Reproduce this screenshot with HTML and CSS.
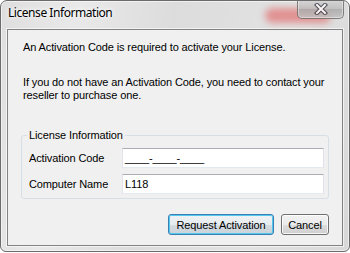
FILE: index.html
```html
<!DOCTYPE html>
<html lang="en">
<head>
    <meta charset="UTF-8">
    <title>License Information</title>
    <link rel="stylesheet" href="styles.css">
</head>
<body>
    <div class="window">
        <div class="titlebar">
            <span class="title">License Information</span>
            <div class="glow"></div>
            <button class="close" type="button" aria-label="Close">
                <svg width="14" height="12" viewBox="0 0 14 12">
                    <path d="M3 2 L11 10 M11 2 L3 10" stroke="#3b3f4a" stroke-width="4.2" stroke-linecap="square" fill="none"/>
                    <path d="M3 2 L11 10 M11 2 L3 10" stroke="#ffffff" stroke-width="2" stroke-linecap="square" fill="none"/>
                </svg>
            </button>
        </div>
        <div class="client">
            <p class="intro first">An Activation Code is required to activate your License.</p>
            <p class="intro">If you do not have an Activation Code, you need to contact your<br>reseller to purchase one.</p>
            <fieldset class="group">
                <legend>License Information</legend>
                <div class="row">
                    <label>Activation Code</label>
                    <div class="field">____-____-____</div>
                </div>
                <div class="row">
                    <label>Computer Name</label>
                    <div class="field">L118</div>
                </div>
            </fieldset>
            <div class="buttons">
                <button class="btn default" type="button">Request Activation</button>
                <button class="btn cancel" type="button">Cancel</button>
            </div>
        </div>
    </div>
</body>
</html>
```

FILE: styles.css
```css
body {
    margin: 0;
    background: #ffffff;
    font-family: "Liberation Sans", Arial, sans-serif;
    font-size: 11px;
    letter-spacing: -0.12px;
    color: #000;
}
.window {
    box-sizing: border-box;
    width: 350px;
    height: 252px;
    border: 1px solid #6b6b6b;
    border-radius: 7px 7px 6px 6px;
    background: linear-gradient(100deg, #dedede 0%, #e9e9e9 20%, #dcdcdc 45%, #e2e2e2 75%, #d8d8d8 100%);
    box-shadow: inset 0 0 0 1px rgba(255, 255, 255, 0.55);
    display: flex;
    flex-direction: column;
    overflow: hidden;
}
.titlebar {
    position: relative;
    height: 28px;
    display: flex;
    justify-content: space-between;
    align-items: flex-start;
}
.title {
    margin: 4px 0 0 7px;
    font-family: "Noto Sans", "Open Sans", sans-serif;
    font-size: 12px;
    letter-spacing: -0.45px;
    line-height: 16px;
    color: #000;
    text-shadow: 0 0 6px #fff, 0 0 4px #fff;
    position: relative;
    z-index: 1;
}
.glow {
    position: absolute;
    left: 264px;
    top: 7px;
    width: 66px;
    height: 15px;
    border-radius: 8px;
    background: rgba(225, 80, 80, 0.55);
    filter: blur(3.5px);
}
.close {
    position: relative;
    z-index: 1;
    width: 47px;
    height: 19px;
    margin: -1px 5px 0 0;
    padding: 0;
    border: 1px solid #6e6e6e;
    border-top: none;
    border-radius: 0 0 5px 5px;
    background: linear-gradient(#d3d3d3, #bdbdbd 50%, #a9a9a9 51%, #c2c2c2);
    box-shadow: inset 0 0 0 1px rgba(255, 255, 255, 0.45);
    display: flex;
    align-items: center;
    justify-content: center;
    opacity: 0.85;
}
.client {
    flex: 1;
    margin: 0 6px 5px 6px;
    border: 1px solid #838383;
    box-shadow: 0 0 0 1px rgba(255, 255, 255, 0.6);
    background: #f0f0f0;
    padding: 11px 13px 0 13px;
}
.intro {
    margin: 0 0 27px 2px;
    line-height: 13px;
    white-space: nowrap;
}
.intro.first {
    margin-bottom: 22px;
}
.group {
    margin: 0;
    padding: 6px 4px 4px 7px;
    border: 1px solid #d5dfe5;
    border-radius: 3px;
    display: flex;
    flex-direction: column;
    gap: 6px;
}
.group legend {
    margin-left: -2px;
    padding: 0 2px;
    line-height: 13px;
}
.row {
    display: flex;
    align-items: center;
}
.row label {
    width: 93px;
    line-height: 13px;
}
.field {
    box-sizing: border-box;
    width: 202px;
    height: 20px;
    padding: 0 0 0 2px;
    background: #fff;
    border: 1px solid #e2e3ea;
    border-top-color: #abadb3;
    border-bottom-color: #e3e9ef;
    line-height: 18px;
}
.buttons {
    display: flex;
    justify-content: flex-end;
    gap: 7px;
    margin-top: 15px;
}
.btn {
    box-sizing: border-box;
    height: 21px;
    padding: 0;
    font-family: "Liberation Sans", Arial, sans-serif;
    font-size: 11px;
    letter-spacing: -0.12px;
    color: #000;
    border: 1px solid #707070;
    border-radius: 3px;
    background: linear-gradient(#f2f2f2 0%, #ebebeb 50%, #dddddd 51%, #cfcfcf 100%);
    box-shadow: inset 0 0 0 1px rgba(255, 255, 255, 0.8);
}
.btn.default {
    width: 106px;
    border-color: #3c7fb1;
    background: linear-gradient(#f0f3f5 0%, #e6ebee 50%, #d6dde2 51%, #c9d2d8 100%);
    box-shadow: inset 0 0 0 1px #52c7f0;
}
.btn.cancel {
    width: 48px;
}
```
